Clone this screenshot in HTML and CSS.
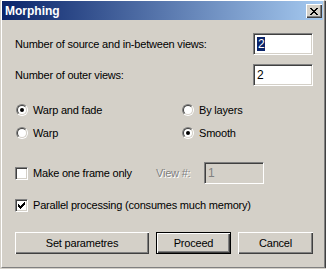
FILE: index.html
```html
<!DOCTYPE html>
<html>
<head>
<meta charset="utf-8">
<link rel="stylesheet" href="styles.css">
</head>
<body>
<div class="window">
  <div class="titlebar">
    <span class="title">Morphing</span>
    <div class="close">
      <svg width="8" height="7" viewBox="0 0 8 7" shape-rendering="crispEdges"><path d="M0 0h2v1h-2z M6 0h2v1h-2z M1 1h2v1h-2z M5 1h2v1h-2z M2 2h4v1h-4z M3 3h2v1h-2z M2 4h4v1h-4z M1 5h2v1h-2z M5 5h2v1h-2z M0 6h2v1h-2z M6 6h2v1h-2z" fill="#000"/></svg>
    </div>
  </div>
  <div class="content">
    <div class="row field">
      <span class="label">Number of source and in-between views:</span>
      <div class="input"><span class="sel">2</span></div>
    </div>
    <div class="row field gap9">
      <span class="label">Number of outer views:</span>
      <div class="input">2</div>
    </div>
    <div class="radios">
      <div class="opt"><span class="radio on"></span><span class="label">Warp and fade</span></div>
      <div class="opt"><span class="radio"></span><span class="label">By layers</span></div>
      <div class="opt"><span class="radio"></span><span class="label">Warp</span></div>
      <div class="opt"><span class="radio on"></span><span class="label">Smooth</span></div>
    </div>
    <div class="row check-row first">
      <div class="opt wide"><span class="check"></span><span class="label">Make one frame only</span></div>
      <span class="label disabled">View #:</span>
      <div class="input dis">1</div>
    </div>
    <div class="row check-row second">
      <div class="opt"><span class="check on"><svg width="7" height="7" viewBox="0 0 7 7" shape-rendering="crispEdges"><path d="M0 2h1v3h-1z M1 3h1v3h-1z M2 4h1v3h-1z M3 3h1v3h-1z M4 2h1v3h-1z M5 1h1v3h-1z M6 0h1v3h-1z" fill="#000"/></svg></span><span class="label">Parallel processing (consumes much memory)</span></div>
    </div>
    <div class="row buttons">
      <div class="btn b-set">Set parametres</div>
      <div class="btn b-def"><div class="btn inner">Proceed</div></div>
      <div class="btn b-cancel">Cancel</div>
    </div>
  </div>
</div>
</body>
</html>
```

FILE: styles.css
```css
html, body {
  margin: 0;
  padding: 0;
  background: #d4d0c8;
}
body {
  font-family: "Liberation Sans", Arial, sans-serif;
  font-size: 11px;
  letter-spacing: -0.2px;
  color: #000;
}
.window {
  width: 326px;
  height: 269px;
  box-sizing: border-box;
  background: #d4d0c8;
  border-top: 1px solid #fff;
  border-left: 1px solid #fff;
  border-right: 1px solid #808080;
  border-bottom: 1px solid #808080;
  box-shadow: -1px 0 0 #d4d0c8, 1px 1px 0 #404040;
  margin-left: 1px;
  width: 324px;
  height: 268px;
  display: flex;
  flex-direction: column;
}
.titlebar {
  height: 19px;
  margin-left: 0;
  margin-right: 1px;
  background: linear-gradient(to right, #0a246a, #a6caf0);
  display: flex;
  align-items: center;
  justify-content: space-between;
  padding: 0 1px 0 3px;
}
.title {
  color: #fff;
  font-weight: bold;
  font-size: 12px;
  letter-spacing: 0;
}
.close {
  width: 16px;
  height: 14px;
  box-sizing: border-box;
  background: #d4d0c8;
  box-shadow: inset 1px 1px 0 #fff, inset -1px -1px 0 #404040, inset -2px -2px 0 #808080;
  display: flex;
  align-items: center;
  justify-content: center;
  padding-right: 1px;
  margin-top: 1px;
}
.close svg { display: block; }
.content {
  flex: 1;
  padding: 13px 11px 0 13px;
  display: flex;
  flex-direction: column;
}
.row {
  height: 22px;
  display: flex;
  align-items: center;
}
.field { justify-content: space-between; }
.gap9 { margin-top: 9px; }
.input {
  width: 60px;
  height: 22px;
  box-sizing: border-box;
  background: #fff;
  border: 1px solid;
  border-color: #808080 #fff #fff #808080;
  box-shadow: inset 1px 1px 0 #404040, inset -1px -1px 0 #d4d0c8;
  padding: 0 2px 0 3px;
  display: flex;
  align-items: center;
  font-size: 12px;
}
.sel {
  background: #0a246a;
  color: #fff;
  padding: 0 1px;
  line-height: 14px;
}
.input.dis {
  background: #d4d0c8;
  color: #808080;
}
.radios {
  margin-top: 13px;
  display: grid;
  grid-template-columns: 166px 1fr;
  grid-auto-rows: 22px;
  row-gap: 1px;
}
.opt {
  display: flex;
  align-items: center;
}
.radio {
  position: relative;
  width: 12px;
  height: 12px;
  box-sizing: border-box;
  border-radius: 50%;
  border: 1px solid;
  border-color: #808080 #fff #fff #808080;
  margin: 0 5px 0 1px;
  transform: rotate(0deg);
}
.radio::before {
  content: "";
  position: absolute;
  inset: 0;
  border-radius: 50%;
  border: 1px solid;
  border-color: #404040 #d4d0c8 #d4d0c8 #404040;
  background: #fff;
}
.radio.on::after {
  content: "";
  position: absolute;
  left: 3px;
  top: 3px;
  width: 4px;
  height: 4px;
  border-radius: 50%;
  background: #000;
}
.check {
  width: 13px;
  height: 13px;
  box-sizing: border-box;
  background: #fff;
  border: 1px solid;
  border-color: #808080 #fff #fff #808080;
  box-shadow: inset 1px 1px 0 #404040, inset -1px -1px 0 #d4d0c8;
  margin-right: 5px;
  display: flex;
  align-items: center;
  justify-content: center;
}
.check svg { display: block; }
.check-row.first { margin-top: 18px; }
.check-row.second { margin-top: 10px; }
.wide { width: 141px; }
.disabled {
  color: #808080;
  text-shadow: 1px 1px 0 #fff;
  width: 48px;
}
.buttons {
  margin-top: 16px;
  gap: 7px;
}
.btn {
  height: 22px;
  box-sizing: border-box;
  background: #d4d0c8;
  box-shadow: inset 1px 1px 0 #fff, inset -1px -1px 0 #404040, inset -2px -2px 0 #808080;
  display: flex;
  align-items: center;
  justify-content: center;
}
.b-set { width: 134px; }
.b-cancel { width: 75px; }
.b-def {
  width: 75px;
  border: 1px solid #000;
  box-shadow: none;
  padding: 0;
}
.b-def .inner {
  width: 100%;
  height: 100%;
}
```
